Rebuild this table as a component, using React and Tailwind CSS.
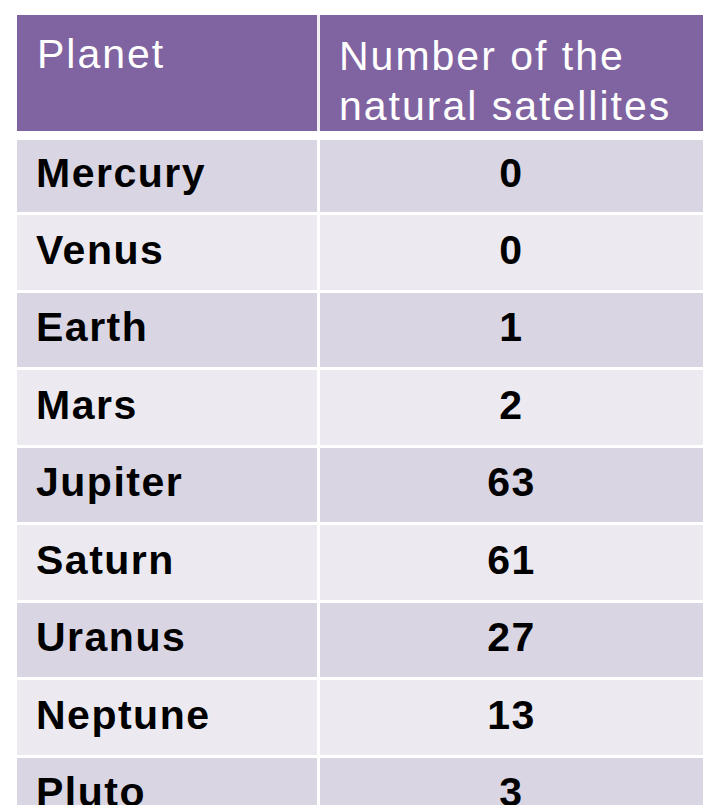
import React from "react";

const planets = [
  ["Mercury", "0"],
  ["Venus", "0"],
  ["Earth", "1"],
  ["Mars", "2"],
  ["Jupiter", "63"],
  ["Saturn", "61"],
  ["Uranus", "27"],
  ["Neptune", "13"],
  ["Pluto", "3"],
];

const font = { fontFamily: '"Liberation Sans", Arial, sans-serif' };

const App = () => {
  return (
    <div className="w-[720px] h-[805px] overflow-hidden bg-white" style={font}>
      <div className="ml-[17px] mt-[15px] w-[686px] flex flex-col">
        <div className="flex h-[116px] bg-[#8064a2] text-white text-[41px] leading-[50px] tracking-[2px]">
          <div className="w-[300px] pl-[20px] pt-[14px]">Planet</div>
          <div className="w-[3px] bg-white/90"></div>
          <div className="flex-1 pl-[19px] pt-[16px]">
            Number of the
            <br />
            natural satellites
          </div>
        </div>
        <div className="h-[9px]"></div>
        <div className="flex flex-col gap-y-[3px]">
          {planets.map(([name, count], i) => (
            <div
              key={name}
              className={
                "flex font-bold text-black text-[41px] tracking-[1.5px] " +
                (i === 0 ? "h-[72px] " : "h-[74.5px] ") +
                (i % 2 === 0 ? "bg-[#d9d5e3]" : "bg-[#eceaf0]")
              }
            >
              <div className="w-[300px] pl-[19px] flex items-center pb-[4px]">
                {name}
              </div>
              <div className="w-[3px] bg-white"></div>
              <div className="flex-1 flex items-center justify-center pb-[4px]">
                {count}
              </div>
            </div>
          ))}
        </div>
      </div>
    </div>
  );
};

export default App;
